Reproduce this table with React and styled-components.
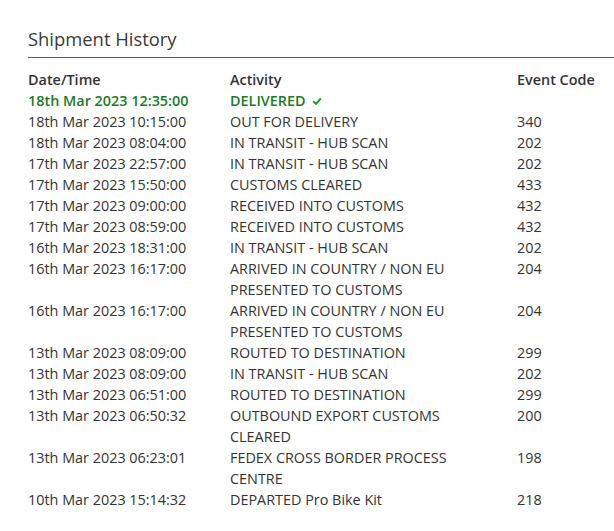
import React from "react";
import styled, { createGlobalStyle } from "styled-components";

const Global = createGlobalStyle`
  html, body { margin: 0; padding: 0; background: #fff; }
  body { font-family: "Open Sans", "Noto Sans", Arial, sans-serif; color: #333; }
`;

const Page = styled.section`
  padding: 27px 0 0 28px;
`;

const Title = styled.h2`
  margin: 0;
  font-size: 18.4px;
  font-weight: 400;
  line-height: 24px;
  color: #3a3a3a;
  padding-bottom: 6px;
  border-bottom: 1px solid #57537a;
`;

const Table = styled.div`
  display: grid;
  grid-template-columns: 202px 287px 1fr;
  margin-top: 11px;
  font-size: 14.4px;
  line-height: 21px;
`;

const Cell = styled.div`
  color: ${p => (p.$green ? "#1c7a26" : "#333")};
  font-weight: ${p => (p.$head || p.$green ? 600 : 400)};
  padding-right: ${p => (p.$wrap ? "40px" : "0")};
  white-space: ${p => (p.$wrap ? "normal" : "nowrap")};
  letter-spacing: 0;
`;

const Check = styled.svg`
  width: 10px;
  height: 10px;
  margin-left: 6px;
  vertical-align: 0px;
`;

const rows = [
  ["18th Mar 2023 10:15:00", "OUT FOR DELIVERY", "340"],
  ["18th Mar 2023 08:04:00", "IN TRANSIT - HUB SCAN", "202"],
  ["17th Mar 2023 22:57:00", "IN TRANSIT - HUB SCAN", "202"],
  ["17th Mar 2023 15:50:00", "CUSTOMS CLEARED", "433"],
  ["17th Mar 2023 09:00:00", "RECEIVED INTO CUSTOMS", "432"],
  ["17th Mar 2023 08:59:00", "RECEIVED INTO CUSTOMS", "432"],
  ["16th Mar 2023 18:31:00", "IN TRANSIT - HUB SCAN", "202"],
  ["16th Mar 2023 16:17:00", "ARRIVED IN COUNTRY / NON EU PRESENTED TO CUSTOMS", "204"],
  ["16th Mar 2023 16:17:00", "ARRIVED IN COUNTRY / NON EU PRESENTED TO CUSTOMS", "204"],
  ["13th Mar 2023 08:09:00", "ROUTED TO DESTINATION", "299"],
  ["13th Mar 2023 08:09:00", "IN TRANSIT - HUB SCAN", "202"],
  ["13th Mar 2023 06:51:00", "ROUTED TO DESTINATION", "299"],
  ["13th Mar 2023 06:50:32", "OUTBOUND EXPORT CUSTOMS CLEARED", "200"],
  ["13th Mar 2023 06:23:01", "FEDEX CROSS BORDER PROCESS CENTRE", "198"],
  ["10th Mar 2023 15:14:32", "DEPARTED Pro Bike Kit", "218"],
];

export default function App() {
  return (
    <>
      <Global />
      <Page>
        <Title>Shipment History</Title>
        <Table>
          <Cell $head>Date/Time</Cell>
          <Cell $head>Activity</Cell>
          <Cell $head>Event Code</Cell>
          <Cell $green>18th Mar 2023 12:35:00</Cell>
          <Cell $green>
            DELIVERED
            <Check viewBox="0 0 10 10">
              <path d="M1.2 5.2 L4 7.8 L8.8 2.4" fill="none" stroke="#1c9a2a" strokeWidth="2" />
            </Check>
          </Cell>
          <Cell />
          {rows.map((r, i) => (
            <React.Fragment key={i}>
              <Cell>{r[0]}</Cell>
              <Cell $wrap>{r[1]}</Cell>
              <Cell>{r[2]}</Cell>
            </React.Fragment>
          ))}
        </Table>
      </Page>
    </>
  );
}
